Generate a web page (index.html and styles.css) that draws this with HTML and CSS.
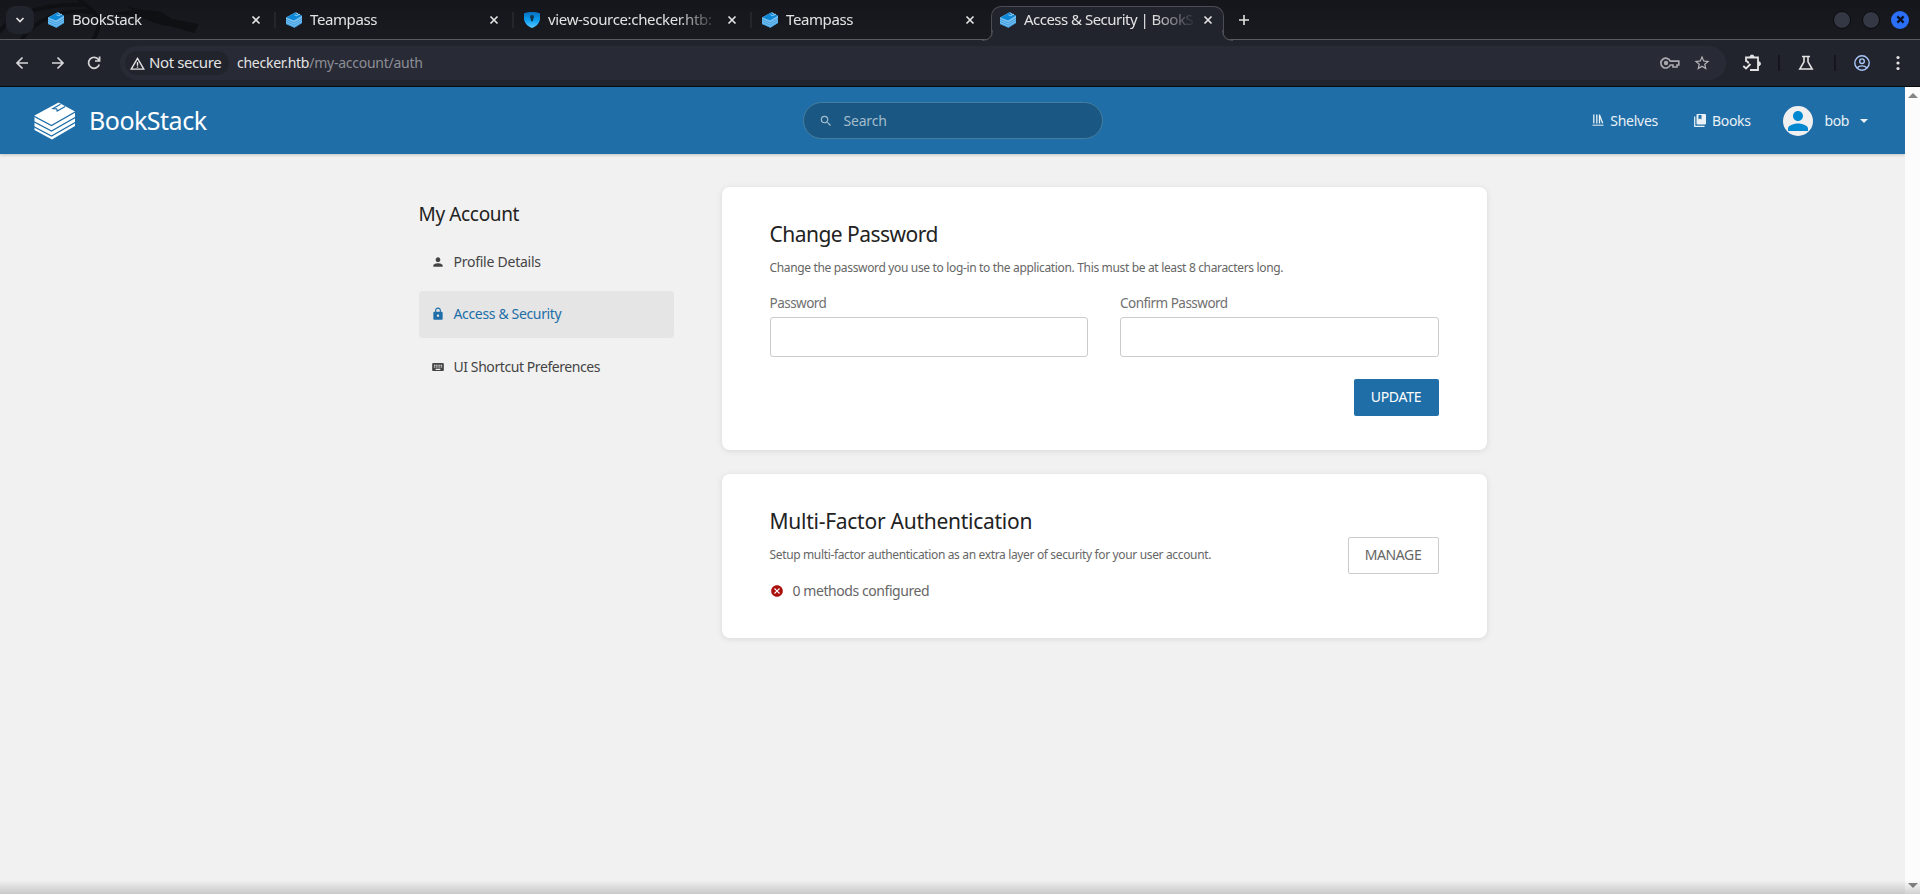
FILE: index.html
```html
<!DOCTYPE html>
<html lang="en">
<head>
<meta charset="utf-8">
<title>Access &amp; Security | BookStack</title>
<link rel="stylesheet" href="styles.css">
</head>
<body>
<svg class="defs" aria-hidden="true">
  <symbol id="stack" viewBox="0 0 16 16">
    <path fill="#7cc0ee" d="M0 5.500 9.500.3 16 3.700V11L8.500 15.800 0 12z"/>
    <path fill="#0c86d6" d="M.5 5.500 9.500.5 15.800 3.800 8 8.500z"/>
    <path fill="none" stroke="#2a96e0" stroke-width=".8" d="M0 7.300l8.200 3.700L16 6.300M0 9.400l8.200 3.700L16 8.400M0 11.500l8.200 3.700L16 10.500"/>
    <path fill="none" stroke="#bfe3fa" stroke-width=".8" d="m8.500 2.800 2 .9 3.500-1.600M10 .8l2.200 1.400"/>
  </symbol>
  <symbol id="close" viewBox="0 0 10 10"><path d="M1.500 1.500l7 7m0-7-7 7" fill="none" stroke="currentColor" stroke-width="1.700"/></symbol>
  <symbol id="person" viewBox="0 0 24 24"><path d="M12 12c2.210 0 4-1.790 4-4s-1.790-4-4-4-4 1.790-4 4 1.790 4 4 4zm0 2c-2.670 0-8 1.340-8 4v2h16v-2c0-2.660-5.330-4-8-4z"/></symbol>
</svg>

<div class="browser">
  <div class="tabstrip">
    <svg class="dragon" viewBox="0 0 210 39" aria-hidden="true">
      <path fill="none" stroke="#0f1014" stroke-width="4" d="M-5 37C10 14 42 3 85 5M20 42C34 20 60 8 92 12M78-3C88 12 110 12 92 42"/>
      <path fill="#0f1014" d="M128 5c8 6 20 4 33 7l11 7 27 5-5 9-24-7c-15-1-20-7-34-9-8-2-16-2-24-4 12-1 16-3 22-2-4-2-6-4-6-6z"/>
    </svg>
    <button class="tab-search" aria-label="Search tabs"><svg viewBox="0 0 10 10"><path d="M1.500 3 5 6.500 8.500 3" fill="none" stroke="currentColor" stroke-width="1.700"/></svg></button>
    <div class="tab"><svg class="favicon"><use href="#stack"/></svg><span class="tab-title t-book">BookStack</span><svg class="close"><use href="#close"/></svg></div>
    <div class="tab"><svg class="favicon"><use href="#stack"/></svg><span class="tab-title t-team">Teampass</span><svg class="close"><use href="#close"/></svg></div>
    <div class="tab"><svg class="favicon" viewBox="0 0 16 16"><defs><linearGradient id="sh" x2="0" y2="1"><stop stop-color="#0a6fc0"/><stop offset=".5" stop-color="#0a9df0"/><stop offset="1" stop-color="#5cc8ff"/></linearGradient></defs><path fill="url(#sh)" d="M8 0c3 0 5.500.5 8 1.300V6c0 4.500-3 8-8 10C3 14 0 10.500 0 6V1.300C2.500.5 5 0 8 0z"/><path fill="#12354d" d="M8 3a2 2 0 0 1 2 2c0 1-.7 1.300-.7 2L8.800 9.300H7.200L6.700 7C6.700 6.300 6 6 6 5a2 2 0 0 1 2-2z"/></svg><span class="tab-title t-view">view-source:checker.htb:</span><svg class="close"><use href="#close"/></svg></div>
    <div class="tab before-active"><svg class="favicon"><use href="#stack"/></svg><span class="tab-title t-team">Teampass</span><svg class="close"><use href="#close"/></svg></div>
    <div class="tab active"><svg class="favicon"><use href="#stack"/></svg><span class="tab-title t-access">Access &amp; Security | BookS</span><svg class="close"><use href="#close"/></svg></div>
    <svg class="new-tab" viewBox="0 0 12 12"><path d="M6 1v10M1 6h10" stroke="currentColor" stroke-width="1.600"/></svg>
    <div class="window-controls"><i></i><i></i><i class="quit"><svg viewBox="0 0 10 10"><path d="M1.500 1.500l7 7m0-7-7 7" stroke="#0b1020" stroke-width="2.500"/></svg></i></div>
  </div>
  <div class="toolbar">
    <svg class="nav" viewBox="0 0 16 16"><path d="M14 8H3m5.500-5.500L3 8l5.500 5.500"/></svg>
    <svg class="nav" viewBox="0 0 16 16"><path d="M2 8h11M7.500 2.500 13 8l-5.500 5.500"/></svg>
    <svg class="nav" viewBox="0 0 16 16"><path d="M13.300 9.500A5.500 5.500 0 1 1 12.500 4.500L13.500 6M13.600 1.500V6H9"/></svg>
    <div class="omnibox">
      <span class="security"><svg viewBox="0 0 16 14"><path d="M8 1.500 14.800 13H1.200zM8 5.500v3.800M8 10.200v1.500" fill="none" stroke="currentColor" stroke-width="1.500"/></svg><span class="insecure">Not secure</span></span>
      <span class="url"><b>checker.htb</b>/my-account/auth</span>
      <svg class="key" viewBox="0 0 20 12"><path d="M10.300 4.200A4.900 4.900 0 1 0 10.300 8H13V10h4V8H18.800V4.200z" fill="none" stroke="currentColor" stroke-width="1.700"/><circle cx="6" cy="6" r="2.200" fill="currentColor"/></svg>
      <svg class="star" viewBox="0 0 24 24"><path fill="currentColor" d="m22 9.240-7.190-.62L12 2 9.190 8.630 2 9.240l5.460 4.730L5.820 21 12 17.270 18.180 21l-1.630-7.030zM12 15.400l-3.760 2.270 1-4.280-3.320-2.880 4.380-.38L12 6.100l1.710 4.040 4.380.38-3.320 2.880 1 4.280z"/></svg>
    </div>
    <svg class="ext" viewBox="0 0 20 18"><path d="M4 7.500V3.500H16V16H8" fill="none" stroke="currentColor" stroke-width="1.800"/><path d="M8 3a2 2 0 0 1 4 0zM16.500 7.700a2 2 0 0 1 0 4z" fill="currentColor" stroke="currentColor"/><path d="M1.300 12 4 14.500l4.500-4.500M3.500 7.200C5.500 7 6.300 8 6.300 9.500" fill="none" stroke="currentColor" stroke-width="1.800"/></svg>
    <i class="bar"></i>
    <svg class="flask" viewBox="0 0 16 16"><path d="M4 1.500h8M6 1.500v5.300L1.800 14h12.400L10 6.800V1.500" fill="none" stroke="currentColor" stroke-width="1.600"/></svg>
    <i class="bar"></i>
    <svg class="profile" viewBox="0 0 16 16" fill="none" stroke="currentColor" stroke-width="1.400"><circle cx="8" cy="8" r="7.200"/><circle cx="8" cy="6.200" r="2.300"/><path d="M3 13c2.500-2.800 7.500-2.800 10 0"/></svg>
    <svg class="dots" viewBox="0 0 4 16" fill="currentColor"><circle cx="2" cy="2.500" r="1.600"/><circle cx="2" cy="8" r="1.600"/><circle cx="2" cy="13.500" r="1.600"/></svg>
  </div>
</div>

<div class="viewport">
  <div class="page">
    <header class="header">
      <a class="logo">
        <svg viewBox="0 0 42 38"><path fill="#fff" d="M.5 13.500 24.500.5 41 9.500V24L18 37.500.5 28z"/><path fill="none" stroke="#206ea7" stroke-width="1.300" d="M0 14.200l17.500 9.300L42 9.500M0 19.700l17.500 9.300L42 15M0 24.700l17.500 9.300L42 20"/><path fill="none" stroke="#206ea7" stroke-width="1.200" d="M26.500 2.300l-7.500 4.200 3.600.3.600 2.200 8-4.500"/></svg>
        <span class="logo-text">BookStack</span>
      </a>
      <div class="search"><svg viewBox="0 0 24 24"><path fill="currentColor" d="M15.500 14h-.79l-.28-.27A6.471 6.471 0 0 0 16 9.500 6.500 6.500 0 1 0 9.500 16c1.610 0 3.090-.59 4.230-1.570l.27.28v.79l5 4.990L20.490 19l-4.990-5zm-6 0C7.010 14 5 11.990 5 9.500S7.010 5 9.500 5 14 7.010 14 9.500 11.990 14 9.500 14z"/></svg><span class="t-search">Search</span></div>
      <nav class="links">
        <a class="shelves"><svg viewBox="0 0 12 12"><path d="M1.800.5v9M4.800.5v9M7.500 1l3.200 8.300M7.500.5v9" fill="none" stroke="currentColor" stroke-width="1.300"/><path d="M.5 11.200h11" stroke="currentColor" stroke-width="1"/></svg><span class="t-shelves">Shelves</span></a>
        <a class="books"><svg viewBox="0 0 12 13"><path fill="currentColor" d="M3.500 0H11a1 1 0 0 1 1 1v8.500a1 1 0 0 1-1 1H3.500a1 1 0 0 1-1-1V1a1 1 0 0 1 1-1z"/><path d="M.7 2.500v9.800h9.800" fill="none" stroke="currentColor" stroke-width="1.200"/><path fill="#206ea7" d="M4.500 1h3v4.500L6 4.500l-1.500 1z"/></svg><span class="t-books">Books</span></a>
        <a class="user"><span class="avatar"><svg><use href="#person"/></svg></span><span class="t-bob">bob</span><i class="caret"></i></a>
      </nav>
    </header>
    <div class="content">
      <aside class="sidebar">
        <h5 class="t-account">My Account</h5>
        <a class="item"><svg><use href="#person"/></svg><span class="t-profile">Profile Details</span></a>
        <a class="item current"><svg viewBox="0 0 24 24"><path d="M18 8h-1V6c0-2.760-2.240-5-5-5S7 3.240 7 6v2H6c-1.100 0-2 .9-2 2v10c0 1.100.9 2 2 2h12c1.100 0 2-.9 2-2V10c0-1.100-.9-2-2-2zm-6 9c-1.100 0-2-.9-2-2s.9-2 2-2 2 .9 2 2-.9 2-2 2zm3.100-9H8.900V6c0-1.710 1.390-3.100 3.100-3.100s3.100 1.390 3.100 3.100z"/></svg><span class="t-nav-access">Access &amp; Security</span></a>
        <a class="item"><svg viewBox="0 0 24 24"><path d="M20 5H4c-1.100 0-1.990.9-1.990 2L2 17c0 1.100.9 2 2 2h16c1.100 0 2-.9 2-2V7c0-1.100-.9-2-2-2zm-9 3h2v2h-2zm0 3h2v2h-2zM8 8h2v2H8zm0 3h2v2H8zm-1 2H5v-2h2zm0-3H5V8h2zm9 7H8v-2h8zm0-4h-2v-2h2zm0-3h-2V8h2zm3 3h-2v-2h2zm0-3h-2V8h2z"/></svg><span class="t-shortcut">UI Shortcut Preferences</span></a>
      </aside>
      <main class="main">
        <section class="card password">
          <h1 class="t-change">Change Password</h1>
          <p class="desc t-desc1">Change the password you use to log-in to the application. This must be at least 8 characters long.</p>
          <div class="fields">
            <label><span class="t-pass">Password</span><input type="password"></label>
            <label><span class="t-confirm">Confirm Password</span><input type="password"></label>
          </div>
          <div class="actions"><button class="button primary"><span class="t-update">UPDATE</span></button></div>
        </section>
        <section class="card mfa">
          <div class="mfa-text">
            <h1 class="t-multi">Multi-Factor Authentication</h1>
            <p class="desc t-desc2">Setup multi-factor authentication as an extra layer of security for your user account.</p>
            <p class="status"><svg viewBox="0 0 24 24"><path fill="#ab0f0e" d="M12 2C6.470 2 2 6.470 2 12s4.470 10 10 10 10-4.470 10-10S17.530 2 12 2zm5 13.590L15.590 17 12 13.410 8.410 17 7 15.590 10.590 12 7 8.410 8.410 7 12 10.590 15.590 7 17 8.410 13.410 12z"/></svg><span class="t-methods">0 methods configured</span></p>
          </div>
          <button class="button outline"><span class="t-manage">MANAGE</span></button>
        </section>
      </main>
    </div>
  </div>
  <div class="scrollbar"><i class="up"></i><i class="down"></i></div>
  <div class="fade"></div>
</div>
</body>
</html>
```
FILE: styles.css
```css
* { box-sizing: border-box; }
body { margin: 0; width: 1920px; height: 894px; overflow: hidden; display: flex; flex-direction: column; font-family: "Noto Sans", sans-serif; font-size: 14px; color: #444; }
h1, h5, p { margin: 0; font-weight: 400; }
span { white-space: nowrap; }
svg { flex: none; }
.defs { display: none; }

.browser { height: 87px; background: #22242d; border-bottom: 1px solid #0b0c0f; flex: none; color: #e3e3e3; }
.tabstrip { position: relative; height: 40px; display: flex; align-items: center; background: linear-gradient(#15161b, #1a1b20); border-bottom: 1px solid #5a5a60; }
.dragon { position: absolute; left: 0; top: 0; width: 210px; height: 39px; }
.tab-search { position: relative; width: 28px; height: 28px; margin: 0 5px 0 6px; padding: 9px; border: 0; border-radius: 9px; background: #22242d; color: #e3e3e3; }
.tab-search svg { display: block; width: 10px; height: 10px; }
.tab { position: relative; width: 238px; height: 39px; padding: 0 14px 0 9px; display: flex; align-items: center; flex: none; }
.tab:not(.active):not(.before-active)::after { content: ""; position: absolute; right: 1px; top: 12px; width: 2px; height: 16px; background: #25262d; }
.favicon { width: 16px; height: 16px; margin-right: 8px; }
.tab-title { flex: 1; overflow: hidden; font-size: 15px; line-height: 22px; margin-right: 11px; padding-bottom: 2px; -webkit-mask-image: linear-gradient(90deg, #000 128px, transparent 172px); }
.close { width: 10px; height: 10px; margin-right: 2px; }
.active { height: 34px; width: 233px; padding: 0 8px 7px 8px; margin: 6px 0 0; align-self: flex-start; background: #22242d; border: 1px solid #4c4d54; border-bottom: 0; border-radius: 10px 10px 0 0; }
.active .tab-title { margin-right: 10px; }
.active::before, .active::after { content: ""; position: absolute; bottom: -1px; width: 10px; height: 10px; border: 1px solid #4c4d54; border-width: 0 1px 1px 0; border-radius: 0 0 10px; left: -10px; box-shadow: 4px 4px 0 #22242d; clip-path: inset(0 -1px 0 0); }
.active::after { left: auto; right: -10px; border-width: 0 0 1px 1px; border-radius: 0 0 0 10px; box-shadow: -4px 4px 0 #22242d; clip-path: inset(0 0 0 -1px); }
.new-tab { width: 12px; height: 12px; margin-left: 14px; }
.window-controls { margin-left: auto; display: flex; gap: 11px; padding-right: 11px; }
.window-controls i { width: 18px; height: 18px; border-radius: 50%; background: #343844; border: 1px solid #0a0a0d; }
.window-controls .quit { background: #2a6ff5; border: 0; padding: 4.500px; }
.quit svg { display: block; width: 9px; height: 9px; }

.toolbar { height: 46px; display: flex; align-items: center; padding-left: 14px; }
.nav { width: 16px; height: 16px; margin-right: 20px; fill: none; stroke: #d7d7da; stroke-width: 1.700; }
.omnibox { width: 1606px; height: 34px; margin-left: -2px; border-radius: 17px; background: #282a35; display: flex; align-items: center; padding: 0 15px 0 5px; }
.security { height: 24px; width: 104px; border-radius: 12px; background: #22242d; display: flex; align-items: center; padding-left: 5px; }
.security svg { width: 15px; height: 13px; margin-right: 4px; }
.insecure { font-size: 15px; padding-bottom: 2px; }
.url { margin-left: 8px; color: #8d8e96; font-size: 14px; padding-bottom: 1px; }
.url b { font-weight: 400; color: #e3e3e3; }
.key { width: 20px; height: 12px; margin-left: auto; color: #a9a9ad; }
.star { width: 18px; height: 18px; margin-left: 13px; color: #b5b5b8; }
.ext { width: 20px; height: 18px; margin-left: 16px; }
.bar { width: 2px; height: 16px; background: #15161b; margin-left: 16px; }
.flask { width: 16px; height: 16px; margin-left: 18px; }
.bar + .profile { margin-left: 18px; }
.flask + .bar { margin-left: 20px; }
.profile { width: 16px; height: 16px; color: #a8c7fa; }
.dots { width: 4px; height: 16px; margin-left: 26px; }

.viewport { position: relative; flex: 1; display: flex; min-height: 0; }
.page { width: 1905px; background: #f1f1f1; }
.header { height: 67px; background: #206ea7; display: grid; grid-template-columns: 1fr 300px 1fr; align-items: center; padding: 0 37px; box-shadow: 0 1px 3px rgba(0,0,0,.2); color: #e9f1f6; }
.logo { display: flex; align-items: center; color: #fff; margin-left: -3px; }
.logo svg { width: 42px; height: 38px; margin-right: 13px; }
.logo-text { font-size: 25px; line-height: 32px; padding-bottom: 2px; }
.search { height: 37px; border: 1px solid #457f9f; border-radius: 19px; background: #1a5782; display: flex; align-items: center; padding-left: 15px; color: #a3bccd; }
.search svg { width: 14px; height: 14px; margin-right: 11px; }
.links { display: flex; justify-content: flex-end; align-items: center; }
.links a { display: flex; align-items: center; }
.shelves svg { width: 12px; height: 12px; margin-right: 6px; }
.books svg { width: 12px; height: 13px; margin-right: 6px; }
.shelves, .books { padding-bottom: 1px; }
.books { margin-left: 36px; }
.user { margin-left: 32px; }
.avatar { width: 30px; height: 30px; border-radius: 50%; background: #f0f0f0; overflow: hidden; margin-right: 12px; }
.avatar svg { display: block; width: 30px; height: 30px; fill: #0288d1; }
.caret { border: 4px solid transparent; border-top-color: currentColor; border-bottom: 0; margin-left: 11px; }

.content { display: flex; gap: 48px; padding: 33px 0 0 418.500px; }
.sidebar { width: 255px; padding-top: 14px; }
.sidebar h5 { font-size: 19px; line-height: 27px; color: #222; margin-bottom: 10px; }
.item { height: 47px; display: flex; align-items: center; padding-left: 12px; border-radius: 4px; margin-bottom: 6px; color: #444; fill: #444; }
.item svg { width: 14px; height: 14px; margin-right: 9px; }
.item.current { background: #e5e5e5; color: #206ea7; fill: #206ea7; }
.item:nth-of-type(n+2) { padding-bottom: 2px; }
.main { width: 765px; display: flex; flex-direction: column; gap: 24px; }
.card { background: #fff; border-radius: 8px; box-shadow: 0 1px 6px rgba(0,0,0,.1); padding: 33px 48px 0; }
.password { height: 263px; }
.card h1 { font-size: 21px; line-height: 29px; color: #222; }
.desc { font-size: 12px; line-height: 18px; margin-top: 10px; color: #666; }
.fields { display: grid; grid-template-columns: 1fr 1fr; gap: 32px; margin-top: 16px; }
.fields label { display: flex; flex-direction: column; gap: 4px; color: #707070; line-height: 20px; font-size: 13.500px; }
.fields input { width: 100%; height: 40px; border: 1px solid #ccc; border-radius: 3px; background: #fff; }
.actions { display: flex; justify-content: flex-end; margin-top: 22px; }
.button { height: 37px; border-radius: 2px; font: 14px "Noto Sans", sans-serif; padding: 0 0 2px; display: flex; align-items: center; justify-content: center; }
.primary { width: 85px; background: #206ea7; border: 0; color: #fff; }
.outline { width: 91px; background: #fff; border: 1px solid #ccc; color: #666; }
.mfa { height: 164px; display: flex; justify-content: space-between; }
.mfa .outline { margin-top: 30px; }
.status { display: flex; align-items: center; line-height: 20px; margin-top: 17px; color: #666; }
.status svg { width: 14px; height: 14px; margin-right: 9px; }
.scrollbar { width: 15px; background: #fcfcfc; display: flex; flex-direction: column; justify-content: space-between; align-items: center; padding: 6px 0; }
.scrollbar i { border: 5px solid transparent; border-top: 0; border-bottom-color: #858585; }
.scrollbar .down { border-top: 5px solid #858585; border-bottom: 0; }
.fade { position: absolute; left: 0; right: 0; bottom: 0; height: 14px; background: linear-gradient(transparent, rgba(0,0,0,.17)); }

/* Tracking per label */
.t-book { letter-spacing: -.4px; }
.t-team { letter-spacing: -.4px; }
.t-view { letter-spacing: -.34px; }
.t-access { letter-spacing: -.52px; }
.insecure { letter-spacing: -.4px; }
.url { letter-spacing: -.25px; }
.logo-text { letter-spacing: -.5px; }
.t-search { letter-spacing: -.2px; }
.t-shelves { letter-spacing: -.25px; }
.t-books { letter-spacing: -.35px; }
.t-bob { letter-spacing: -.4px; }
.t-account { letter-spacing: -.35px; }
.t-profile { letter-spacing: -.25px; }
.t-nav-access { letter-spacing: -.35px; }
.t-shortcut { letter-spacing: -.42px; }
.t-change { letter-spacing: -.53px; }
.t-desc1 { letter-spacing: -.34px; }
.t-pass, .t-confirm { letter-spacing: -.52px; }
.t-update { letter-spacing: -.25px; }
.t-multi { letter-spacing: -.26px; }
.t-desc2 { letter-spacing: -.35px; }
.t-methods { letter-spacing: -.43px; }
.t-manage { letter-spacing: -.4px; }
```
